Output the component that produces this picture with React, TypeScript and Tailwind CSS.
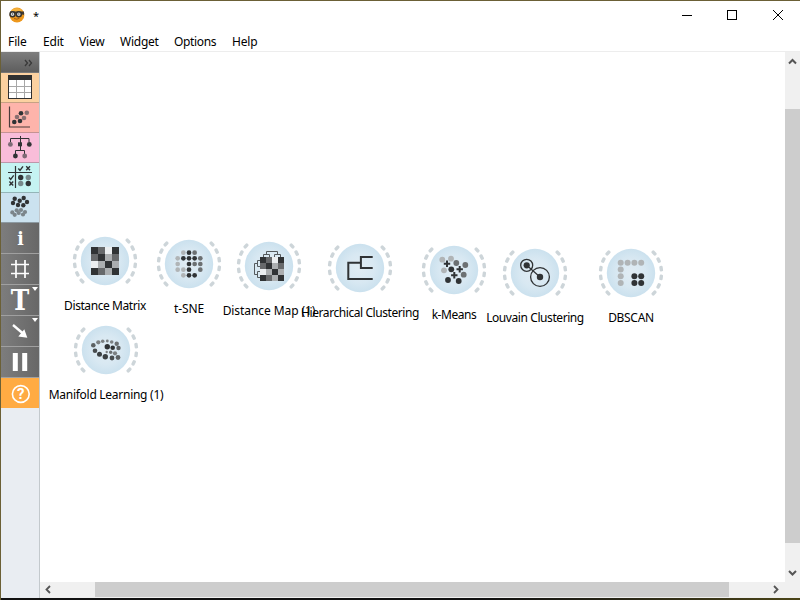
import React from "react";

const DARK = "#303335";
const MID = "#6c7072";
const LIGHT = "#b0b4b6";

type Dot = [number, number, number, string];

function Dots({ items }: { items: Dot[] }) {
  return (
    <>
      {items.map(([x, y, r, c], i) => (
        <circle key={i} cx={x} cy={y} r={r} fill={c} />
      ))}
    </>
  );
}

const MATRIX = [
  [DARK, "#67696b", "#ebeef0", DARK],
  ["#67696b", DARK, "#abaeb0", "#67696b"],
  ["#ebeef0", "#abaeb0", DARK, "#abaeb0"],
  [DARK, "#67696b", "#abaeb0", DARK],
];

function Matrix({ x, y, cell }: { x: number; y: number; cell: number }) {
  return (
    <g shapeRendering="crispEdges">
      {MATRIX.map((row, r) =>
        row.map((c, i) => (
          <rect key={`${r}-${i}`} x={x + i * cell} y={y + r * cell} width={cell} height={cell} fill={c} />
        ))
      )}
    </g>
  );
}

const tsne = [".ldm.", "ldddm", "l.dmm", "lld.m", ".ldd."];
const tones: Record<string, string> = { l: LIGHT, d: DARK, m: MID };
const tsneDots: Dot[] = tsne.flatMap((row, r) =>
  row.split("").flatMap((ch, c): Dot[] =>
    ch === "." ? [] : [[(c - 2) * 5.65, (r - 2) * 5.65, 2.35, tones[ch]]]
  )
);

interface WidgetNode {
  x: number;
  y: number;
  label: string;
  tracking: string;
  icon: React.ReactNode;
}

const nodes: WidgetNode[] = [
  { x: 105, y: 261, label: "Distance Matrix", tracking: "tracking-[-0.42px]", icon: <Matrix x={-14} y={-14} cell={7} /> },
  { x: 189, y: 264, label: "t-SNE", tracking: "tracking-[-0.1px]", icon: <Dots items={tsneDots} /> },
  {
    x: 269, y: 266, label: "Distance Map (1)", tracking: "tracking-[-0.08px]",
    icon: (
      <>
        <path d="M-5.5-9V-11.5H.5V-9M5.5-9V-11.5H11.5V-9M-2.5-11.5V-14.5H8.5V-11.5M-9-5.5H-11.5V.5H-9M-9 5.5H-11.5V11.5H-9M-11.5-2.5H-14.5V8.5H-11.5" fill="none" stroke="#555a5d" />
        <Matrix x={-9} y={-9} cell={6} />
      </>
    ),
  },
  {
    x: 360, y: 268, label: "Hierarchical Clustering", tracking: "tracking-[-0.43px]",
    icon: <path d="M12.7 11H-11.7V-5.3H.9M12.7-11H.9V0H12.7" fill="none" stroke={DARK} strokeWidth="2" />,
  },
  {
    x: 454, y: 270, label: "k-Means", tracking: "tracking-[-0.45px]",
    icon: (
      <>
        <Dots items={[[-11.7, -10.3, 2.9, LIGHT], [-3, -11.3, 2.9, LIGHT], [-10, 0.3, 2.9, LIGHT], [2.3, -7, 2.9, MID], [11.3, -5, 2.9, MID], [9.7, 4.7, 2.9, MID], [-2.7, -0.7, 2.9, DARK], [-6, 10, 2.9, DARK], [4.7, 11, 2.9, DARK]]} />
        <path d="M-10.2-6.3h6.4m-3.2-3.2v6.4M2.5-.7h6.4M5.7-3.9v6.4M-2.9 5.3h6.4M.3 2.1v6.4" stroke={DARK} strokeWidth="2" />
      </>
    ),
  },
  {
    x: 535, y: 273, label: "Louvain Clustering", tracking: "tracking-[-0.42px]",
    icon: (
      <>
        <path d="M-8.3-7.7L5 4" stroke={DARK} strokeWidth="1.2" />
        <g fill="none" stroke={DARK} strokeWidth="1.3">
          <circle cx="-8.3" cy="-7.7" r="6" />
          <circle cx="5" cy="4" r="9.4" />
        </g>
        <Dots items={[[-8.3, -7.7, 3.1, DARK], [5, 4, 3.2, DARK]]} />
      </>
    ),
  },
  {
    x: 631, y: 273, label: "DBSCAN", tracking: "tracking-[-0.3px]",
    icon: <Dots items={[[-10.3, -10.3, 3, LIGHT], [-3.4, -10.3, 3, LIGHT], [3.4, -10.3, 3, LIGHT], [10.2, -10.3, 3, LIGHT], [-10.3, -3.5, 3, LIGHT], [-10.3, 3.3, 3, LIGHT], [-10.3, 10.1, 3, LIGHT], [3.4, 3.3, 3, DARK], [10.2, 3.3, 3, DARK], [3.4, 10.1, 3, DARK], [10.2, 10.1, 3, DARK]]} />,
  },
  {
    x: 106, y: 350, label: "Manifold Learning (1)", tracking: "tracking-[-0.27px]",
    icon: <Dots items={[[-12.7, -4.7, 2.3, "#5d6163"], [-7.7, -7.7, 2.1, "#7c8082"], [-3.3, -8.7, 1.8, "#7c8082"], [1.3, -9, 1.4, "#7c8082"], [5.7, -8, 1.8, "#7c8082"], [10.7, -6.3, 2.2, "#6c7072"], [1.3, -3.3, 2.7, DARK], [6.7, -2.3, 2.3, DARK], [12.5, -2, 2.2, "#5d6163"], [0.7, 2, 1.2, "#7c8082"], [4.7, 2.3, 1.7, "#6c7072"], [9, 3.3, 2.1, "#7c8082"], [12, 7.5, 2.4, "#5d6163"], [6, 8, 2.4, "#484c4e"], [-0.7, 6.7, 2.7, "#3c4042"], [-6.5, 4.3, 2.5, "#3c4042"], [-11, 0.8, 2.3, "#484c4e"]]} />,
  },
];

const dashAngles = [-41, -25, -8.3, 8.3, 25, 41, 139, 155, 171.7, 188.3, 205, 221];

function CanvasNode({ node }: { node: WidgetNode }) {
  return (
    <div
      className="absolute flex w-40 -translate-x-1/2 flex-col items-center"
      style={{ left: node.x - 40, top: node.y - 52 - 34 }}
    >
      <svg width="68" height="68" viewBox="-34 -34 68 68" className="block">
        <circle r="24.2" fill="url(#nodeFill)" />
        {dashAngles.map((a) => (
          <rect key={a} x="28.8" y="-2.8" width="3.4" height="5.6" rx="1.2" fill="#cdd5d9" transform={`rotate(${a})`} />
        ))}
        {node.icon}
      </svg>
      <span className={`mt-[3px] whitespace-nowrap text-[12px] leading-4 text-black ${node.tracking}`}>{node.label}</span>
    </div>
  );
}

function Tool({ y, h, tone, children }: { y: number; h: number; tone: string; children: React.ReactNode }) {
  return (
    <div className={`shrink-0 border-b ${tone}`}>
      <svg width="38" height={h} viewBox={`1 ${y} 38 ${h}`} className="block">
        {children}
      </svg>
    </div>
  );
}

const GRAY_TOOL = "border-[#a0a0a0] bg-linear-to-r from-[#7d7d7d] to-[#676767]";

function Toolbar() {
  return (
    <aside className="flex w-[39px] shrink-0 flex-col border-r border-[#c3c9cd] bg-[#e9edf2]">
      <Tool y={52} h={20} tone="border-[#777777] bg-linear-to-b from-[#7e7e7e] to-[#5e5e5e]">
        <path d="M25 60l2.5 3-2.5 3M29 60l2.5 3-2.5 3" fill="none" stroke="#393939" strokeWidth="1.3" />
      </Tool>
      <Tool y={73} h={29} tone="border-[#c7a184] bg-[#fcd1a0]">
        <rect x="8.5" y="75.5" width="23" height="23" fill="#fff" stroke="#303030" />
        <path d="M8 77.5h24" stroke="#303030" strokeWidth="5" />
        <path d="M16.5 80v18M24.5 80v18M9 86.5h22M9 92.5h22" stroke="#a7a7a7" />
      </Tool>
      <Tool y={103} h={29} tone="border-[#c59293] bg-[#feb4ab]">
        <path d="M9.5 106.5v20.5h20.5" fill="none" stroke="#4a3b3b" strokeWidth="1.2" />
        <Dots items={[[21, 113.3, 2.3, DARK], [14.3, 122, 2.3, DARK], [20, 121, 2.3, DARK], [26.8, 112.8, 2.3, "#896f70"], [17, 117, 2.3, "#896f70"], [24, 118, 2.3, "#896f70"]]} />
      </Tool>
      <Tool y={133} h={29} tone="border-[#bd97ab] bg-[#f9bdd9]">
        <path d="M10.5 142v-3.5h18.5V142M20.5 136v7M20.5 146v4.5M15.5 154v-3.5h9V154" fill="none" stroke={DARK} />
        <rect x="18" y="142.3" width="4" height="4" fill={DARK} />
        <Dots items={[[10.4, 144.4, 2.4, "#7d6a75"], [29.3, 144.4, 2.4, DARK], [15.4, 156, 2.4, DARK], [24.7, 156, 2.4, "#7d6a75"]]} />
      </Tool>
      <Tool y={163} h={29} tone="border-[#94b5b8] bg-[#c5f3f2]">
        <path d="M15.5 166v22M8 172.5h24" stroke={DARK} strokeWidth="1.2" />
        <path d="M18.3 168.5l1.7 1.8 3-4M9 177.5l1.7 1.8 3-4M26.2 166.3l3.8 4M30 166.3l-3.8 4M9.4 181.4l3.8 4M13.2 181.4l-3.8 4" fill="none" stroke={DARK} strokeWidth="1.4" />
        <Dots items={[[20.7, 177.5, 2.7, DARK], [28.3, 177.5, 2.7, "#77888a"], [20.7, 183.5, 2.7, "#77888a"], [28.3, 183.5, 2.7, DARK]]} />
      </Tool>
      <Tool y={193} h={29} tone="border-[#8c9aa2] bg-[#cbe2ef]">
        <Dots items={[[16.7, 210.3, 2.1, "#7b858a"], [21, 210, 2.1, "#7b858a"], [12.3, 212.4, 2.1, "#7b858a"], [25, 212, 2.1, "#7b858a"], [18.7, 213, 2.1, "#7b858a"], [14.7, 214.8, 2.1, "#7b858a"], [23, 214.5, 2.1, "#7b858a"], [14.7, 198.7, 2.2, DARK], [19.7, 200.7, 2.2, DARK], [23.7, 198, 2.2, DARK], [27, 202, 2.2, DARK], [13, 203, 2.2, DARK], [18, 205, 2.2, DARK], [23.3, 205.3, 2.2, DARK]]} />
      </Tool>
      <Tool y={223} h={30} tone={GRAY_TOOL}>
        <text x="20.5" y="245" textAnchor="middle" fill="#fff" fontSize="18" fontWeight="700" fontFamily="DejaVu Serif, serif" textLength="6.5" lengthAdjust="spacingAndGlyphs">i</text>
      </Tool>
      <Tool y={254} h={30} tone={GRAY_TOOL}>
        <path d="M16 260v18M25 260v18M11 264.5h18M11 273.5h18" stroke="#fff" strokeWidth="1.7" />
      </Tool>
      <Tool y={285} h={30} tone={GRAY_TOOL}>
        <text x="20" y="309.5" textAnchor="middle" fill="#fff" fontSize="27" fontWeight="700" fontFamily="DejaVu Serif, serif" textLength="18.5" lengthAdjust="spacingAndGlyphs">T</text>
        <path d="M32 287h6l-3 4z" fill="#fff" />
      </Tool>
      <Tool y={316} h={30} tone={GRAY_TOOL}>
        <path d="M13 325l10 8.5" stroke="#fff" strokeWidth="2.3" />
        <path d="M27.3 337.7l-9-1.2 6-7.2z" fill="#fff" />
        <path d="M32 318h6l-3 4z" fill="#fff" />
      </Tool>
      <Tool y={347} h={30} tone={GRAY_TOOL}>
        <path d="M15.3 353v18M24.7 353v18" stroke="#fff" strokeWidth="5" />
      </Tool>
      <Tool y={378} h={29} tone="border-[#ffab43] bg-[#ffab43]">
        <circle cx="20.8" cy="394" r="8.4" fill="none" stroke="#fff" strokeWidth="1.6" />
        <text x="20.8" y="399.3" textAnchor="middle" fill="#fff" fontSize="15" fontWeight="700" fontFamily="Roboto, sans-serif">?</text>
      </Tool>
    </aside>
  );
}

function TitleBar() {
  return (
    <header className="flex h-[29px] shrink-0 items-center">
      <svg width="16" height="16" viewBox="0 0 16 16" className="-mt-px ml-2 block">
        <circle cx="8" cy="8" r="7.4" fill="#ed981d" />
        <ellipse cx="7.5" cy="4" rx="5" ry="2.8" fill="#f5b23d" />
        <path d="M1 5.5h14M12 6l3 1" stroke="#423b30" strokeWidth="2" />
        <circle cx="3.5" cy="7.3" r="2.5" fill="#d7dadb" stroke="#35332f" strokeWidth="1.5" />
        <circle cx="9.8" cy="7.3" r="2.5" fill="#d7dadb" stroke="#35332f" strokeWidth="1.5" />
        <path d="M3 7h1M9.3 7h1" stroke="#333" />
        <path d="M5 11.5q3 1.5 5.5-.3" stroke="#a65e12" fill="none" />
      </svg>
      <span className="ml-[8px] text-[11px] leading-4">*</span>
      <svg width="104" height="12" viewBox="0 0 104 12" className="mr-[15px] -mt-px ml-auto block" fill="none" stroke="#000">
        <path d="M1 6.5h10" />
        <rect x="46.5" y="1.5" width="9" height="9" />
        <path d="M92 1l10 10M102 1L92 11" />
      </svg>
    </header>
  );
}

function MenuBar() {
  return (
    <nav className="flex h-[22px] shrink-0 items-center border-b border-[#ededed] pt-[2px] pl-[7px] text-[12px] leading-4 text-black">
      <span className="w-[35px] tracking-[-0.1px]">File</span>
      <span className="w-[36px] tracking-[-0.2px]">Edit</span>
      <span className="w-[41px] tracking-[-0.2px]">View</span>
      <span className="w-[54px] tracking-[-0.25px]">Widget</span>
      <span className="w-[58px] tracking-[-0.35px]">Options</span>
      <span className="tracking-[-0.2px]">Help</span>
    </nav>
  );
}

export default function App() {
  return (
    <div className="flex h-[600px] w-[800px] flex-col overflow-hidden border-t border-l border-t-[#6b6036] border-l-[#6b6036] bg-white font-['Noto_Sans',sans-serif] text-black">
      <svg width="0" height="0" className="absolute">
        <defs>
          <radialGradient id="nodeFill">
            <stop offset="0" stopColor="#e1ecf3" />
            <stop offset="0.6" stopColor="#d8e8f2" />
            <stop offset="1" stopColor="#cbe1ee" />
          </radialGradient>
        </defs>
      </svg>
      <TitleBar />
      <MenuBar />
      <main className="flex h-[546px] shrink-0">
        <Toolbar />
        <div className="flex min-w-0 flex-1 flex-col">
          <div className="flex min-h-0 flex-1">
            <section className="relative flex-1 overflow-hidden bg-white">
              {nodes.map((n) => (
                <CanvasNode key={n.label} node={n} />
              ))}
            </section>
            <div className="flex w-[15px] shrink-0 flex-col items-center bg-[#f0f0f0]">
              <svg width="15" height="57" viewBox="0 0 15 57" fill="none" stroke="#555" strokeWidth="2">
                <path d="M4 11.5l3.5-3.5 3.5 3.5" />
              </svg>
              <div className="h-[434px] w-full bg-[#cdcdcd]" />
              <svg width="15" height="38" viewBox="0 0 15 38" fill="none" stroke="#555" strokeWidth="2">
                <path d="M4 28l3.5 3.5 3.5-3.5" />
              </svg>
            </div>
          </div>
          <div className="flex h-4 shrink-0 bg-[#f0f0f0]">
            <svg width="55" height="16" viewBox="0 0 55 16" fill="none" stroke="#555" strokeWidth="1.8">
              <path d="M10 4L6.5 7.5 10 11" />
            </svg>
            <div className="h-[15px] w-[634px] bg-[#cdcdcd]" />
            <svg width="56" height="16" viewBox="0 0 56 16" fill="none" stroke="#555" strokeWidth="1.8">
              <path d="M45 4l3.5 3.5L45 11" />
            </svg>
          </div>
        </div>
      </main>
      <footer className="h-[2px] shrink-0 bg-linear-to-r from-[#111111] from-60% to-[#4b4518]" />
    </div>
  );
}
